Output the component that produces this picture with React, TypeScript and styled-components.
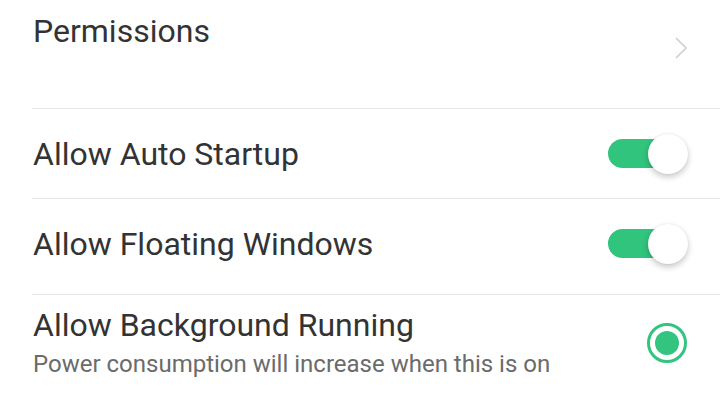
import React from "react";
import styled, { createGlobalStyle } from "styled-components";

const Global = createGlobalStyle`
  html, body { margin: 0; padding: 0; background: #ffffff; }
  body { font-family: Roboto, "Noto Sans", "Liberation Sans", sans-serif; }
  #root { width: 720px; height: 400px; overflow: hidden; background: #ffffff; }
`;

const List = styled.div`
  display: flex;
  flex-direction: column;
  padding-left: 32px;
`;

const Row = styled.div<{ $h: number; $align?: string; $pt?: number; $pb?: number }>`
  display: flex;
  align-items: ${(p) => p.$align || "center"};
  justify-content: space-between;
  height: ${(p) => p.$h}px;
  box-sizing: border-box;
  padding: ${(p) => p.$pt || 0}px 32px ${(p) => p.$pb || 0}px 1px;
  border-bottom: 1px solid #e6e6e6;
  &:last-child { border-bottom: none; }
`;

const TextCol = styled.div`
  display: flex;
  flex-direction: column;
`;

const Title = styled.div`
  font-size: 32px;
  line-height: 36px;
  color: #333333;
`;

const Sub = styled.div`
  font-size: 24px;
  line-height: 28px;
  color: #6b6b6b;
  margin-top: 7px;
`;

const Chevron = styled.svg`
  width: 14px;
  height: 24px;
  margin-top: 23px;
  margin-right: 0px;
`;

const Switch = styled.div`
  position: relative;
  width: 80px;
  height: 40px;
  flex: none;
`;

const Track = styled.div`
  position: absolute;
  left: 0;
  top: 5px;
  width: 72px;
  height: 29px;
  border-radius: 15px;
  background: #31c47d;
`;

const Knob = styled.div`
  position: absolute;
  right: 0;
  top: 0;
  width: 40px;
  height: 40px;
  border-radius: 50%;
  background: #ffffff;
  box-shadow: 0 3px 6px rgba(0, 0, 0, 0.22), 0 0 2px rgba(0, 0, 0, 0.08);
`;

const Radio = styled.div<{ $mt: number }>`
  width: 40px;
  height: 40px;
  box-sizing: border-box;
  border: 3.5px solid #33c47f;
  border-radius: 50%;
  display: flex;
  align-items: center;
  justify-content: center;
  margin-right: 1px;
  margin-top: ${(p) => p.$mt}px;
  flex: none;
`;

const Dot = styled.div`
  width: 24px;
  height: 24px;
  border-radius: 50%;
  background: #33c47f;
`;

const Toggle = () => (
  <Switch>
    <Track />
    <Knob />
  </Switch>
);

export default function App() {
  return (
    <>
      <Global />
      <List>
        <Row $h={109} $align="flex-start" $pt={13}>
          <Title>Permissions</Title>
          <Chevron viewBox="0 0 14 24">
            <polyline points="2,2 12,12 2,22" fill="none" stroke="#cfcfcf" strokeWidth="1.6" />
          </Chevron>
        </Row>
        <Row $h={90}>
          <Title>Allow Auto Startup</Title>
          <Toggle />
        </Row>
        <Row $h={96} $pb={6}>
          <Title>Allow Floating Windows</Title>
          <Toggle />
        </Row>
        <Row $h={105} $align="flex-start" $pt={12}>
          <TextCol>
            <Title>Allow Background Running</Title>
            <Sub>Power consumption will increase when this is on</Sub>
          </TextCol>
          <Radio $mt={16}>
            <Dot />
          </Radio>
        </Row>
      </List>
    </>
  );
}
